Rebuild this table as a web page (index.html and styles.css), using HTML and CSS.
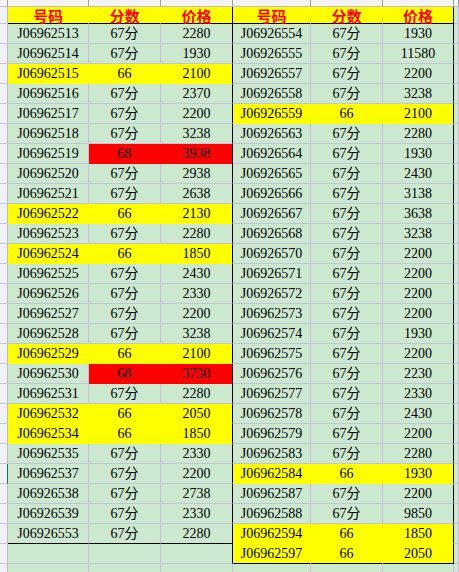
FILE: index.html
```html
<!DOCTYPE html>
<html>
<head>
<meta charset="utf-8">
<link rel="stylesheet" href="styles.css">
</head>
<body>
<div class="sheet">
<div class="c ch"></div><div class="c ch"></div><div class="c ch"></div><div class="c ch"></div><div class="c ch"></div><div class="c ch"></div><div class="c ch"></div><div class="c ch"></div>
<div class="c rh"></div><div class="c y h bb">号码</div><div class="c y h bb">分数</div><div class="c y h bb br">价格</div><div class="c y h bb">号码</div><div class="c y h bb">分数</div><div class="c y h bb br">价格</div><div class="c"></div>
<div class="c rh"></div><div class="c">J06962513</div><div class="c">67分</div><div class="c br">2280</div><div class="c">J06926554</div><div class="c">67分</div><div class="c br">1930</div><div class="c"></div>
<div class="c rh"></div><div class="c">J06962514</div><div class="c">67分</div><div class="c br">1930</div><div class="c">J06926555</div><div class="c">67分</div><div class="c br">11580</div><div class="c"></div>
<div class="c rh"></div><div class="c y">J06962515</div><div class="c y">66</div><div class="c y br">2100</div><div class="c">J06926557</div><div class="c">67分</div><div class="c br">2200</div><div class="c"></div>
<div class="c rh"></div><div class="c">J06962516</div><div class="c">67分</div><div class="c br">2370</div><div class="c">J06926558</div><div class="c">67分</div><div class="c br">3238</div><div class="c"></div>
<div class="c rh"></div><div class="c">J06962517</div><div class="c">67分</div><div class="c br">2200</div><div class="c y">J06926559</div><div class="c y">66</div><div class="c y br">2100</div><div class="c"></div>
<div class="c rh"></div><div class="c">J06962518</div><div class="c">67分</div><div class="c br">3238</div><div class="c">J06926563</div><div class="c">67分</div><div class="c br">2280</div><div class="c"></div>
<div class="c rh"></div><div class="c">J06962519</div><div class="c r">68</div><div class="c r br">3938</div><div class="c">J06926564</div><div class="c">67分</div><div class="c br">1930</div><div class="c"></div>
<div class="c rh"></div><div class="c">J06962520</div><div class="c">67分</div><div class="c br">2938</div><div class="c">J06926565</div><div class="c">67分</div><div class="c br">2430</div><div class="c"></div>
<div class="c rh"></div><div class="c">J06962521</div><div class="c">67分</div><div class="c br">2638</div><div class="c">J06926566</div><div class="c">67分</div><div class="c br">3138</div><div class="c"></div>
<div class="c rh"></div><div class="c y">J06962522</div><div class="c y">66</div><div class="c y br">2130</div><div class="c">J06926567</div><div class="c">67分</div><div class="c br">3638</div><div class="c"></div>
<div class="c rh"></div><div class="c">J06962523</div><div class="c">67分</div><div class="c br">2280</div><div class="c">J06926568</div><div class="c">67分</div><div class="c br">3238</div><div class="c"></div>
<div class="c rh"></div><div class="c y">J06962524</div><div class="c y">66</div><div class="c y br">1850</div><div class="c">J06926570</div><div class="c">67分</div><div class="c br">2200</div><div class="c"></div>
<div class="c rh"></div><div class="c">J06962525</div><div class="c">67分</div><div class="c br">2430</div><div class="c">J06926571</div><div class="c">67分</div><div class="c br">2200</div><div class="c"></div>
<div class="c rh"></div><div class="c">J06962526</div><div class="c">67分</div><div class="c br">2330</div><div class="c">J06926572</div><div class="c">67分</div><div class="c br">2200</div><div class="c"></div>
<div class="c rh"></div><div class="c">J06962527</div><div class="c">67分</div><div class="c br">2200</div><div class="c">J06962573</div><div class="c">67分</div><div class="c br">2200</div><div class="c"></div>
<div class="c rh"></div><div class="c">J06962528</div><div class="c">67分</div><div class="c br">3238</div><div class="c">J06962574</div><div class="c">67分</div><div class="c br">1930</div><div class="c"></div>
<div class="c rh"></div><div class="c y">J06962529</div><div class="c y">66</div><div class="c y br">2100</div><div class="c">J06962575</div><div class="c">67分</div><div class="c br">2200</div><div class="c"></div>
<div class="c rh"></div><div class="c">J06962530</div><div class="c r">68</div><div class="c r br">3730</div><div class="c">J06962576</div><div class="c">67分</div><div class="c br">2230</div><div class="c"></div>
<div class="c rh"></div><div class="c">J06962531</div><div class="c">67分</div><div class="c br">2280</div><div class="c">J06962577</div><div class="c">67分</div><div class="c br">2330</div><div class="c"></div>
<div class="c rh"></div><div class="c y">J06962532</div><div class="c y">66</div><div class="c y br">2050</div><div class="c">J06962578</div><div class="c">67分</div><div class="c br">2430</div><div class="c"></div>
<div class="c rh"></div><div class="c y">J06962534</div><div class="c y">66</div><div class="c y br">1850</div><div class="c">J06962579</div><div class="c">67分</div><div class="c br">2200</div><div class="c"></div>
<div class="c rh"></div><div class="c">J06962535</div><div class="c">67分</div><div class="c br">2330</div><div class="c">J06962583</div><div class="c">67分</div><div class="c br">2280</div><div class="c"></div>
<div class="c rh sel"></div><div class="c">J06962537</div><div class="c">67分</div><div class="c br">2200</div><div class="c y">J06962584</div><div class="c y">66</div><div class="c y br">1930</div><div class="c"></div>
<div class="c rh"></div><div class="c">J06926538</div><div class="c">67分</div><div class="c br">2738</div><div class="c">J06962587</div><div class="c">67分</div><div class="c br">2200</div><div class="c"></div>
<div class="c rh"></div><div class="c">J06926539</div><div class="c">67分</div><div class="c br">2330</div><div class="c">J06962588</div><div class="c">67分</div><div class="c br">9850</div><div class="c"></div>
<div class="c rh"></div><div class="c bb">J06926553</div><div class="c bb">67分</div><div class="c bb br">2280</div><div class="c y">J06962594</div><div class="c y">66</div><div class="c y br">1850</div><div class="c"></div>
<div class="c rh"></div><div class="c"></div><div class="c"></div><div class="c br"></div><div class="c y bb">J06962597</div><div class="c y bb">66</div><div class="c y bb br">2050</div><div class="c"></div>
<div class="c rh"></div><div class="c"></div><div class="c"></div><div class="c"></div><div class="c"></div><div class="c"></div><div class="c"></div><div class="c"></div>
</div>
</body>
</html>
```
FILE: styles.css
```css
* {
  box-sizing: border-box;
}

body {
  margin: 0;
  width: 459px;
  height: 572px;
  overflow: hidden;
  background: #cce8cf;
}

.sheet {
  display: grid;
  grid-template-columns: 8px 81px 72px 72px 78px 72px 71px 5px;
  grid-template-rows: 7px 17px repeat(28, 20px);
  font-family: "Liberation Serif", "Noto Sans CJK SC", serif;
  font-size: 14px;
  color: #000;
}

.c {
  background: #cce8cf;
  border-right: 1px solid #c3c3dd;
  border-bottom: 1px solid #c3c3dd;
  text-align: center;
  line-height: 19px;
  white-space: nowrap;
  overflow: hidden;
}

.ch {
  background: #f4f4f4;
  border-right-color: #a0a0a0;
  border-bottom-color: #bdbdbd;
}

.rh {
  background: #f1f2f5;
  border-right-color: #bcbcc8;
  border-bottom-color: #c6c6d6;
}

.sel {
  border-right: 1px solid #217346;
}

.y {
  background: #ffff00;
  border-right-color: #ffff00;
  border-bottom-color: #ffff00;
}

.r {
  background: #ff0000;
  border-right-color: #ff0000;
  border-bottom-color: #ff0000;
}

.h {
  font-family: "Noto Sans CJK SC", sans-serif;
  font-weight: bold;
  font-size: 15px;
  line-height: 16px;
  padding-top: 1px;
  overflow: visible;
  color: #ff0000;
}

.bb {
  border-bottom-color: #000;
}

.br {
  border-right-color: #000;
}
```
